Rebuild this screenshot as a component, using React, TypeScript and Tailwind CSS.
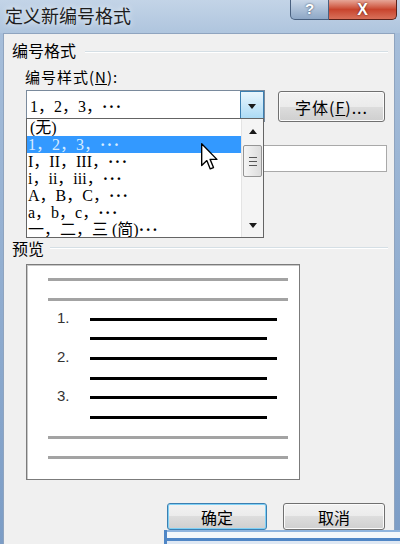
import React from "react"

const cjk = "font-['Noto_Sans_CJK_SC',sans-serif]"
const serif = "font-['Liberation_Serif','Noto_Sans_CJK_SC',serif]"

const Dots = () => <span className="font-['Liberation_Serif',serif] font-bold tracking-[1.5px]">···</span>

const listItems = [
	{ text: "(无)", cn: true },
	{ text: "1，2，3，", dots: true, selected: true },
	{ text: "I，II，III，", dots: true },
	{ text: "i，ii，iii，", dots: true },
	{ text: "A，B，C，", dots: true },
	{ text: "a，b，c，", dots: true },
	{ text: "一，二，三 (简)", dots: true },
]

const previewRows: { kind: "gray" | "long" | "short"; num?: string }[] = [
	{ kind: "gray" },
	{ kind: "gray" },
	{ kind: "long", num: "1." },
	{ kind: "short" },
	{ kind: "long", num: "2." },
	{ kind: "short" },
	{ kind: "long", num: "3." },
	{ kind: "short" },
	{ kind: "gray" },
	{ kind: "gray" },
]

function TitleBar() {
	return (
		<div className="flex h-[33px] shrink-0 items-start bg-gradient-to-b from-[#c3d4e7] to-[#afc5de]">
			<div
				className={`${cjk} pl-[5px] pt-[3px] text-[18px] leading-[25px] text-[#1d1d1d] [text-shadow:0_0_6px_#ffffff]`}
			>
				定义新编号格式
			</div>
			<div className="ml-auto mr-[3px] flex h-[20px]">
				<div className="flex w-[39px] items-center justify-center rounded-bl-[5px] border border-t-0 border-[#49607f] bg-gradient-to-b from-[#c9d7e8] to-[#8ea7c6] font-['Liberation_Sans',sans-serif] text-[15px] font-bold text-white [text-shadow:0_0_2px_#2a3b55]">
					?
				</div>
				<div className="flex w-[68px] items-center justify-center rounded-br-[5px] border border-l-0 border-t-0 border-[#5a2119] bg-gradient-to-b from-[#e6a597] via-[#c8442d] to-[#d8705a] font-['Liberation_Sans',sans-serif] text-[16px] font-bold text-white [text-shadow:0_0_2px_#4a120a]">
					X
				</div>
			</div>
		</div>
	)
}

function Win7Button({ children, focused, className }: { children: React.ReactNode; focused?: boolean; className?: string }) {
	return (
		<div
			className={`flex items-center justify-center rounded-[3px] border ${
				focused ? "border-[#3c7fb1] shadow-[inset_0_0_0_1px_#7fd0f5]" : "border-[#707070] shadow-[inset_0_0_0_1px_#fbfbfb]"
			} bg-[linear-gradient(#f2f2f2,#ebebeb_50%,#dddddd_50%,#cfcfcf)] ${cjk} text-[16px] leading-[20px] text-black ${className ?? ""}`}
		>
			{children}
		</div>
	)
}

function Triangle({ up }: { up?: boolean }) {
	return (
		<svg width="8" height="5" viewBox="0 0 8 5">
			<path d={up ? "M0 5 L4 0 L8 5 Z" : "M0 0 L8 0 L4 5 Z"} fill="#1a1a1a" />
		</svg>
	)
}

function DropList() {
	return (
		<div className="absolute left-[22px] top-[84px] flex h-[120px] w-[238px] overflow-hidden border border-[#646464] bg-white">
			<div className="flex w-[214px] flex-col">
				{listItems.map((item) => (
					<div
						key={item.text}
						className={`flex h-[17px] shrink-0 items-center whitespace-nowrap pl-[1px] text-[16px] leading-[17px] ${serif} ${
							item.selected ? "bg-[#3399ff] text-[#d8ecff]" : "text-black"
						} ${item.cn ? "pl-[3px]" : ""}`}
					>
						{item.text}
						{item.dots && <Dots />}
					</div>
				))}
			</div>
			<div className="flex w-[22px] flex-col border-l border-[#e4e4e4] bg-[#f4f4f4]">
				<div className="flex h-[24px] items-center justify-center">
					<Triangle up />
				</div>
				<div className="mx-[1px] mt-[2px] flex h-[32px] flex-col items-center justify-center gap-[3px] rounded-[2px] border border-[#959595] bg-gradient-to-r from-[#f5f5f5] to-[#dcdcdc]">
					<div className="h-[1px] w-[8px] bg-[#555]" />
					<div className="h-[1px] w-[8px] bg-[#555]" />
					<div className="h-[1px] w-[8px] bg-[#555]" />
				</div>
				<div className="flex-1" />
				<div className="flex h-[24px] items-center justify-center">
					<Triangle />
				</div>
			</div>
		</div>
	)
}

function Cursor() {
	return (
		<svg className="absolute left-[197px] top-[109px]" width="17" height="28" viewBox="0 0 12.5 20.5">
			<path d="M0.5 0.5 L0.5 16.5 L4.3 12.9 L6.8 19 L9.2 18 L6.7 12 L11.7 12 Z" fill="#fff" stroke="#000" strokeWidth="1" strokeLinejoin="round" />
		</svg>
	)
}

function Preview() {
	return (
		<div className="ml-[22px] mt-[6px] h-[216px] w-[274px] border border-[#7b7b7b] bg-white pt-[5px] shadow-[inset_1px_1px_0_#c8c8c8]">
			{previewRows.map((row, i) => (
				<div key={i} className="flex h-[19.7px] items-center">
					{row.kind === "gray" ? (
						<div className="ml-[21px] h-[3px] w-[240px] bg-[#a3a3a3]" />
					) : (
						<>
							<div className="-mt-[3px] ml-[30px] w-[33px] font-['Liberation_Sans',sans-serif] text-[15px] leading-[18px] text-[#333]">
								{row.num}
							</div>
							<div className={`h-[3px] bg-black ${row.kind === "long" ? "w-[187px]" : "w-[177px]"}`} />
						</>
					)}
				</div>
			))}
		</div>
	)
}

export default function App() {
	return (
		<div className="relative flex h-[544px] w-[400px] flex-col overflow-hidden bg-gradient-to-b from-[#a9c0db] to-[#7c9dc6]">
			<TitleBar />
			<div className="relative ml-[3px] mr-[5px] flex flex-1 flex-col border border-b-0 border-[#8fa4bf] bg-[#f0f0f0]">
				<div className="mt-[6px] flex h-[20px] items-center pl-[8px] pr-[6px]">
					<span className={`${cjk} text-[16px] leading-[20px] text-black`}>编号格式</span>
					<div className="ml-[9px] mt-[4px] flex-1 border-b border-t border-b-white border-t-[#d5dfe5]" />
				</div>

				<div className={`${cjk} ml-[21px] mt-[8px] text-[15px] leading-[18px] tracking-[1px] text-black`}>
					编号样式(<span className="underline">N</span>):
				</div>

				<div className="ml-[22px] mt-[4px] flex items-start">
					<div className="flex h-[32px] w-[239px] border border-[#7a8a9c] bg-white">
						<div className={`${serif} flex flex-1 items-center whitespace-nowrap pl-[3px] text-[16px] leading-[17px] text-black`}>
							1，2，3，
							<Dots />
						</div>
						<div className="flex w-[24px] items-center justify-center border border-[#3c7fb1] bg-gradient-to-b from-[#eaf6fd] to-[#a7d9f5]">
							<Triangle />
						</div>
					</div>
					<Win7Button className="ml-[13px] mt-[1px] h-[31px] w-[107px] tracking-[1px]">
						字体(<span className="underline">F</span>)...
					</Win7Button>
				</div>

				<div className="ml-[22px] mt-[23px] h-[27px] w-[361px] border border-[#a9a9a9] bg-white" />

				<div className="mt-[66px] flex h-[20px] items-center pl-[8px] pr-[6px]">
					<span className={`${cjk} text-[16px] leading-[20px] text-black`}>预览</span>
					<div className="ml-[6px] flex-1 border-b border-t border-b-white border-t-[#d5dfe5]" />
				</div>

				<Preview />

				<div className="mt-[23px] flex justify-end gap-[16px] pr-[9px]">
					<Win7Button focused className="h-[27px] w-[100px]">
						确定
					</Win7Button>
					<Win7Button className="h-[27px] w-[102px]">取消</Win7Button>
				</div>

				<DropList />
				<Cursor />
			</div>

			<div className="absolute bottom-0 left-[164px] right-0 top-[530px] flex flex-col border-l-[3px] border-[#4f86c6]">
				<div className="h-[2px] bg-[#8fb4de]" />
				<div className="h-[6px] bg-[#f3f7fb]" />
				<div className="h-[3px] bg-[#4f86c6]" />
				<div className="flex-1 bg-[#dfe8f3]" />
			</div>
		</div>
	)
}
